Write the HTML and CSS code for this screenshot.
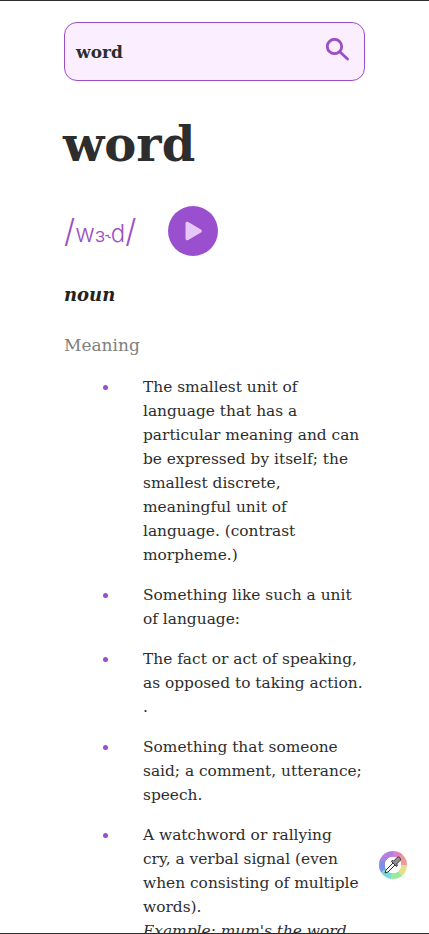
FILE: index.html
```html
<!DOCTYPE html>
<html lang="en">
<head>
  <meta charset="UTF-8">
  <meta name="viewport" content="width=device-width, initial-scale=1.0">
  <title>Dictionary</title>
  <link rel="stylesheet" href="styles.css">
</head>
<body>
  <main class="page">
    <div class="search">
      <span class="search-text">word</span>
      <svg class="search-icon" viewBox="0 0 23 23" width="23" height="23" fill="none" stroke="#9a4fc8" stroke-width="2.800" stroke-linecap="round">
        <circle cx="8.500" cy="8.500" r="7.200"></circle>
        <path d="M14 14l7.500 7"></path>
      </svg>
    </div>

    <h1 class="title">word</h1>

    <div class="sound">
      <span class="phonetic"><span class="slash">/</span>w<span class="vowel">ɜ˞</span>d<span class="slash">/</span></span>
      <button class="play">
        <svg viewBox="0 0 20 20" width="20" height="20"><path d="M2.500 2.600c0-1.600 1.500-2.300 2.800-1.500l12.600 7.300c1.300.8 1.300 2.500 0 3.200L5.300 18.900c-1.300.8-2.800.1-2.800-1.500z" fill="#e9c6f8"></path></svg>
      </button>
    </div>

    <h2 class="part">noun</h2>
    <h3 class="label">Meaning</h3>

    <ul class="meanings">
      <li><div>The smallest unit of language that has a particular meaning and can be expressed by itself; the smallest discrete, meaningful unit of language. (contrast morpheme.)</div></li>
      <li><div>Something like such a unit of language:</div></li>
      <li><div>The fact or act of speaking, as opposed to taking action. .</div></li>
      <li><div>Something that someone said; a comment, utterance; speech.</div></li>
      <li><div>A watchword or rallying cry, a verbal signal (even when consisting of multiple words).<br><em>Example: mum's the word</em></div></li>
    </ul>
  </main>

  <div class="picker">
    <svg viewBox="0 0 20 20" width="20" height="20" fill="#8f8f8f" stroke="#333" stroke-width="1" stroke-linejoin="round">
      <path d="M2 18l1-3 7-7 2 2-7 7z" fill="#fff"></path>
      <path d="M8.500 6.500l5 5 1-1.500-1-1 3.500-3.500c1-1 .5-2-.2-2.800s-1.800-1-2.800 0L10.500 6.200l-1-1z"></path>
    </svg>
  </div>
</body>
</html>
```

FILE: styles.css
```css
html, body { margin: 0; height: 100%; }
body { background: #fff; color: #2d2d2d; font-family: "DejaVu Serif", serif; height: 934px; box-sizing: border-box; border-top: 1px solid #2d2d2d; border-bottom: 1px solid #2d2d2d; overflow: hidden; position: relative; }
.page { width: 301px; margin: 0 auto; padding-top: 21px; }

.search { display: flex; align-items: center; justify-content: space-between; height: 59px; box-sizing: border-box; padding: 0 15px 4px 11px; background: #fbeeff; border: 1px solid #9a4fc8; border-radius: 13px; }
.search-text { font-size: 17px; font-weight: bold; margin-top: 4px; }

.title { margin: 30px 0 0 -1px; font-size: 48px; line-height: 66px; font-weight: bold; }

.sound { display: flex; align-items: center; gap: 32px; margin-top: 29px; }
.phonetic { font-family: Inter, sans-serif; font-size: 24px; font-weight: 300; line-height: 1; color: #9a4fc8; width: 72px; white-space: nowrap; }
.slash { font-size: 32px; line-height: 1; }
.vowel { font-size: 20px; line-height: 1; }
.play { width: 50px; height: 50px; padding: 0; border: none; border-radius: 50%; background: #9a4fcf; display: flex; align-items: center; justify-content: center; }

.part { margin: 26px 0 0; font-size: 18px; line-height: 26px; font-style: italic; font-weight: bold; color: #222; }
.label { margin: 24px 0 0; font-size: 17px; line-height: 26px; font-weight: normal; color: #808080; }

.meanings { list-style: none; margin: 17px 0 0; padding: 0 2px 0 39px; font-size: 15.400px; line-height: 24px; }
.meanings li { display: flex; margin-bottom: 16px; }
.meanings li::before { content: ""; flex: none; width: 5px; height: 5px; margin: 10px 35px 0 0; border-radius: 50%; background: #9a4fcf; }
.meanings em { font-style: italic; }

.picker { position: absolute; left: 379px; top: 850px; width: 28px; height: 28px; border-radius: 50%; display: flex; align-items: center; justify-content: center; background: radial-gradient(circle, #fff 0 8px, transparent 8.500px), conic-gradient(#e07fc8 0 40deg, #ef9a9a 40deg 90deg, #e5e08a 90deg 140deg, #9ce89a 140deg 190deg, #74dcd8 190deg 240deg, #8090e8 240deg 290deg, #b07fe0 290deg 360deg); }
```
